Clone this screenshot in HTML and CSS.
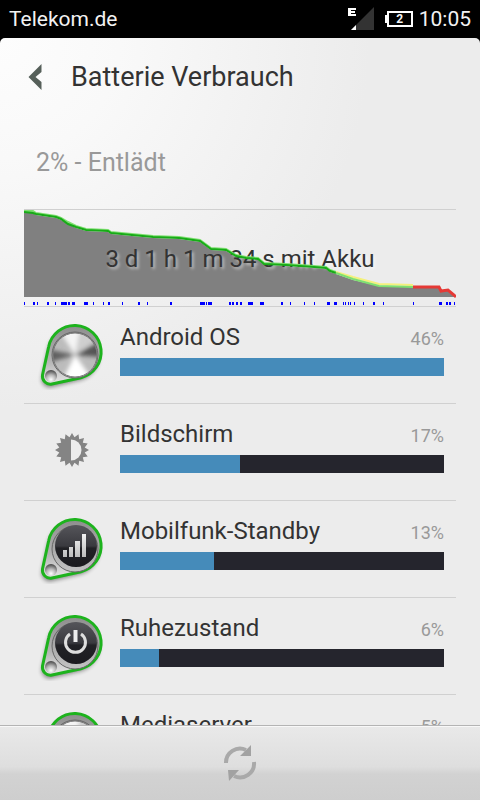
FILE: index.html
```
<!DOCTYPE html>
<html lang="de">
<head>
    <meta charset="UTF-8">
    <meta name="viewport" content="width=device-width, initial-scale=1.0">
    <title>Batterie Verbrauch</title>
    <link rel="stylesheet" href="styles.css">
</head>
<body>
    <!-- shared icon parts -->
    <svg class="defs" width="0" height="0" aria-hidden="true">
        <defs>
            <linearGradient id="plate" x1="0" y1="0" x2="0" y2="1">
                <stop offset="0" stop-color="#8d8d8d"/>
                <stop offset="0.6" stop-color="#b4b4b4"/>
                <stop offset="1" stop-color="#e6e6e6"/>
            </linearGradient>
            <linearGradient id="rim" x1="0" y1="0" x2="0" y2="1">
                <stop offset="0" stop-color="#8f8f8f"/>
                <stop offset="1" stop-color="#c4c4c4"/>
            </linearGradient>
            <linearGradient id="dark" x1="0" y1="0" x2="0" y2="1">
                <stop offset="0" stop-color="#55555a"/>
                <stop offset="0.5" stop-color="#3a3a3f"/>
                <stop offset="0.55" stop-color="#222226"/>
                <stop offset="1" stop-color="#1b1b1f"/>
            </linearGradient>
            <linearGradient id="glyph" x1="0" y1="0" x2="0" y2="1">
                <stop offset="0" stop-color="#f2f2f2"/>
                <stop offset="1" stop-color="#bdbdbd"/>
            </linearGradient>
            <radialGradient id="screw" cx="0.5" cy="0.8" r="0.8">
                <stop offset="0" stop-color="#ffffff"/>
                <stop offset="0.5" stop-color="#b5b5b5"/>
                <stop offset="1" stop-color="#444444"/>
            </radialGradient>
            <filter id="soft" x="-20%" y="-20%" width="140%" height="140%">
                <feGaussianBlur stdDeviation="2"/>
            </filter>
            <clipPath id="disc"><circle cx="40" cy="36" r="22"/></clipPath>
        </defs>
        <symbol id="badge" viewBox="0 0 72 72">
            <path d="M7 58L13 30A26 26 0 1 1 46 61L17 68A8 8 0 0 1 7 58Z" fill="#000" opacity="0.45" filter="url(#soft)"/>
            <path d="M7.500 56L13.600 28A26.500 26.500 0 1 1 46 58.700L17 65A8 8 0 0 1 7.500 56Z" fill="url(#plate)" stroke="#1db31d" stroke-width="3" stroke-linejoin="round"/>
            <circle cx="16" cy="57" r="6" fill="url(#screw)"/>
            <circle cx="40" cy="36" r="23" fill="url(#rim)" stroke="#666" stroke-width="1"/>
        </symbol>
        <symbol id="metal" viewBox="0 0 72 72">
            <use href="#badge"/>
            <g clip-path="url(#disc)">
                <circle cx="40" cy="36" r="22" fill="#bcbcbc"/>
                <g filter="url(#soft)">
                    <path d="M40 36L22 8L46 8Z" fill="#f4f4f4"/>
                    <path d="M40 36L66 22L66 38Z" fill="#555"/>
                    <path d="M40 36L12 30L12 44Z" fill="#606060"/>
                    <path d="M40 36L26 64L60 64Z" fill="#ffffff"/>
                    <path d="M40 36L48 8L66 16Z" fill="#cfcfcf"/>
                </g>
            </g>
            <circle cx="40" cy="36" r="22" fill="none" stroke="#777" stroke-width="1"/>
        </symbol>
        <symbol id="black" viewBox="0 0 72 72">
            <use href="#badge"/>
            <circle cx="41" cy="33" r="21" fill="url(#dark)"/>
        </symbol>
    </svg>

    <div class="statusbar">
        <span class="carrier">Telekom.de</span>
        <svg class="signal" viewBox="0 0 28 24" aria-label="Signal">
            <path d="M3 23L26 0V23Z" fill="#333"/>
            <path d="M3 23L8 18V23Z" fill="#fff"/>
            <path d="M0 1h8v2H3v1h4v2H3v1h5v2H0Z" fill="#fff"/>
        </svg>
        <span class="battery">2</span>
        <time class="clock">10:05</time>
    </div>

    <div class="screen">
        <header>
            <button class="back" type="button" aria-label="Zurück">
                <svg viewBox="0 0 14 26"><path d="M13 0V8L7 13L13 18V26L0 13Z"/></svg>
            </button>
            <h1>Batterie Verbrauch</h1>
        </header>

        <main>
            <p class="state">2% - Entlädt</p>

            <div class="chart">
                <svg viewBox="0 0 432 96" preserveAspectRatio="none">
                    <path fill="#808080" d="M0 2L9 3L12 5L32 8L37 10L44 14L52 18L62 21L84 22L87 24L129 28L155 29L176 32L187 40L202 41L212 47L222 49L234 50L240 55L262 56L290 58L302 59L306 62L312 64L329 70L355 76L389 77L415 77L417 80L424 80L430 85L432 87H0Z"/>
                    <path fill="#0000ff" d="M0 92h1v3h-1zM9 92h2v3h-2zM13 92h1v3h-1zM23 92h2v3h-2zM31 92h1v3h-1zM37 92h6v3h-6zM44 92h2v3h-2zM48 92h3v3h-3zM60 92h4v3h-4zM69 92h1v3h-1zM79 92h1v3h-1zM84 92h2v3h-2zM98 92h1v3h-1zM114 92h2v3h-2zM123 92h1v3h-1zM146 92h2v3h-2zM176 92h5v3h-5zM182 92h1v3h-1zM184 92h4v3h-4zM205 92h2v3h-2zM208 92h2v3h-2zM212 92h2v3h-2zM216 92h2v3h-2zM224 92h5v3h-5zM236 92h4v3h-4zM257 92h2v3h-2zM266 92h1v3h-1zM280 92h1v3h-1zM290 92h1v3h-1zM303 92h3v3h-3zM310 92h3v3h-3zM319 92h1v3h-1zM321 92h1v3h-1zM324 92h1v3h-1zM326 92h1v3h-1zM330 92h1v3h-1zM339 92h1v3h-1zM349 92h2v3h-2zM359 92h1v3h-1zM389 92h1v3h-1zM415 92h3v3h-3zM422 92h2v3h-2zM425 92h2v3h-2zM430 92h1v3h-1z"/>
                </svg>
                <span class="runtime">3 d 1 h 1 m 34 s mit Akku</span>
                <svg viewBox="0 0 432 96" preserveAspectRatio="none" fill="none" stroke-width="2">
                    <path stroke="#7ee070" d="M0 1L9 1L12 3L32 6L37 8L44 12L52 16L62 19L84 20L87 22L129 26L155 27L176 30L187 38L202 39L212 45L222 47L234 48L240 53L262 54L290 56L302 57L306 60L312 62"/>
                    <path stroke="#18ab18" d="M0 2L9 3L12 4L32 7L37 9L44 14L52 17L62 20L84 21L87 23L129 27L155 28L176 31L187 39L202 40L212 46L222 48L234 49L240 54L262 55L290 57L302 58L306 61L312 63"/>
                    <path stroke="#f4f17c" d="M312 62L329 67L355 74L389 75"/>
                    <path stroke="#7ee070" d="M312 63L329 69L355 76L389 77"/>
                    <path stroke="#e53935" stroke-width="3" d="M389 77H415L417 81L424 80L430 85L432 87"/>
                </svg>
            </div>

            <ul class="usage">
                <li>
                    <svg class="icon" viewBox="1 -1 72 72"><use href="#metal" width="72" height="72"/></svg>
                    <div class="info">
                        <div class="label"><span class="name">Android OS</span><span class="percent">46%</span></div>
                        <div class="bar"><div class="fill" style="width: 100%"></div></div>
                    </div>
                </li>
                <li>
                    <svg class="icon" viewBox="-36 -35 72 72">
                        <path fill="#848484" d="M0 -17L2.500 -12.700L6.500 -15.700L7.200 -10.800L12 -12L10.800 -7.200L15.700 -6.500L12.700 -2.500L17 0L12.700 2.500L15.700 6.500L10.800 7.200L12 12L7.200 10.800L6.500 15.700L2.500 12.700L0 17L-2.500 12.700L-6.500 15.700L-7.200 10.800L-12 12L-10.800 7.200L-15.700 6.500L-12.700 2.500L-17 0L-12.700 -2.500L-15.700 -6.500L-10.800 -7.200L-12 -12L-7.200 -10.800L-6.500 -15.700L-2.500 -12.700Z"/>
                        <path fill="#ececec" d="M-1 -10.500A10.500 10.500 0 0 1 -1 10.500Z"/>
                    </svg>
                    <div class="info">
                        <div class="label"><span class="name">Bildschirm</span><span class="percent">17%</span></div>
                        <div class="bar"><div class="fill" style="width: 37%"></div></div>
                    </div>
                </li>
                <li>
                    <svg class="icon" viewBox="1 -1 72 72">
                        <use href="#black" width="72" height="72"/>
                        <path fill="url(#glyph)" d="M28 37h4v7h-4zM34 34h4v10h-4zM40 28h5v16h-5zM47 21h4v23h-4z"/>
                    </svg>
                    <div class="info">
                        <div class="label"><span class="name">Mobilfunk-Standby</span><span class="percent">13%</span></div>
                        <div class="bar"><div class="fill" style="width: 29%"></div></div>
                    </div>
                </li>
                <li>
                    <svg class="icon" viewBox="1 -1 72 72">
                        <use href="#black" width="72" height="72"/>
                        <path fill="none" stroke="#dedede" stroke-width="3" d="M35 24A10 10 0 1 0 46 24"/>
                        <path fill="none" stroke="#eeeeee" stroke-width="4" d="M40.500 20V32"/>
                    </svg>
                    <div class="info">
                        <div class="label"><span class="name">Ruhezustand</span><span class="percent">6%</span></div>
                        <div class="bar"><div class="fill" style="width: 12%"></div></div>
                    </div>
                </li>
                <li>
                    <svg class="icon" viewBox="1 -1 72 72"><use href="#metal" width="72" height="72"/></svg>
                    <div class="info">
                        <div class="label"><span class="name">Mediaserver</span><span class="percent">5%</span></div>
                        <div class="bar"><div class="fill" style="width: 11%"></div></div>
                    </div>
                </li>
            </ul>
        </main>

        <footer>
            <button class="refresh" type="button" aria-label="Aktualisieren">
                <svg viewBox="0 0 36 36">
                    <path fill="none" stroke="#a9a9a9" stroke-width="4" d="M4 18A14 14 0 0 1 24 5M32 17A14 14 0 0 1 12 31"/>
                    <path fill="#a2a2a2" d="M29 0V11H18ZM6 25H17L7 36Z"/>
                </svg>
            </button>
        </footer>
    </div>
</body>
</html>
```
FILE: styles.css
```
* {
    box-sizing: border-box;
}
body {
    font-family: Roboto, "Noto Sans", sans-serif;
    margin: 0;
    height: 100vh;
    display: flex;
    flex-direction: column;
    background-color: #000;
    color: #333;
}
svg {
    display: block;
}
.defs {
    position: absolute;
}
.statusbar {
    display: flex;
    align-items: center;
    height: 38px;
    padding: 0 9px;
    color: #f2f2f2;
    font-size: 21px;
}
.carrier {
    flex: 1;
}
.signal {
    width: 28px;
    height: 24px;
    margin-right: 11px;
}
.battery {
    width: 26px;
    height: 16px;
    margin-right: 6px;
    border: 2px solid #fff;
    position: relative;
    font-size: 12px;
    font-weight: bold;
    line-height: 12px;
    text-align: center;
}
.battery::before {
    content: "";
    position: absolute;
    left: -4px;
    top: 2px;
    width: 2px;
    height: 8px;
    background: #fff;
}
.screen {
    flex: 1;
    min-height: 0;
    display: flex;
    flex-direction: column;
    overflow: hidden;
    border-radius: 5px 5px 0 0;
    background: radial-gradient(circle at 0 0, #fdfdfd 0, #f9f9f9 120px, #ececec 370px);
}
header {
    display: flex;
    align-items: center;
    gap: 28px;
    height: 78px;
    padding: 0 28px;
}
h1 {
    margin: 0;
    font-size: 27px;
    font-weight: normal;
}
button {
    border: none;
    background: none;
    padding: 0;
    cursor: pointer;
}
.back svg {
    width: 15px;
    height: 26px;
    fill: #56605a;
}
main {
    flex: 1;
    min-height: 0;
    overflow: hidden;
    padding: 0 24px;
}
.state {
    margin: 0;
    padding: 0 12px;
    line-height: 93px;
    font-size: 25px;
    color: #999;
}
.chart {
    display: grid;
    height: 98px;
    border-top: 1px solid #d0d0d0;
    border-bottom: 1px solid #d0d0d0;
}
.chart > * {
    grid-area: 1 / 1;
    width: 100%;
    height: 96px;
}
.runtime {
    line-height: 98px;
    text-align: center;
    font-size: 24px;
    text-shadow: 2px 2px 3px rgba(255, 255, 255, 0.5);
}
.usage {
    list-style: none;
    margin: 0;
    padding: 0;
}
.usage li {
    display: flex;
    gap: 12px;
    height: 97px;
    padding: 11px 12px 0;
    border-bottom: 1px solid #d0d0d0;
}
.icon {
    width: 72px;
    height: 72px;
    flex: none;
}
.info {
    flex: 1;
}
.label {
    display: flex;
    justify-content: space-between;
    align-items: baseline;
    height: 40px;
    line-height: 38px;
}
.name {
    font-size: 24px;
}
.percent {
    font-size: 18px;
    color: #999;
}
.bar {
    height: 18px;
    background-color: #25252d;
}
.fill {
    height: 100%;
    background-color: #458bba;
}
footer {
    display: flex;
    justify-content: center;
    align-items: center;
    height: 75px;
    border-top: 1px solid #b4b4b4;
    box-shadow: inset 0 1px #f8f8f8;
    background: linear-gradient(#e9e9e9, #dedede 55%, #d2d2d2 65%, #cecece);
}
.refresh svg {
    width: 36px;
    height: 36px;
}
```
